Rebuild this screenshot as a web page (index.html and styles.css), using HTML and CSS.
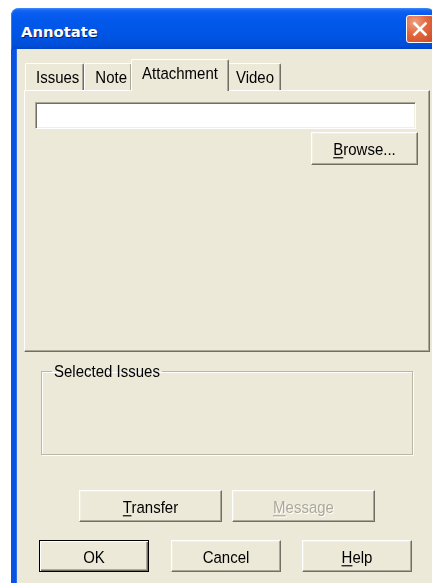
FILE: index.html
```html
<!DOCTYPE html>
<html>
<head>
<meta charset="utf-8">
<title>Annotate</title>
<link rel="stylesheet" href="styles.css">
</head>
<body>
<div class="window">
  <div class="titlebar">
    <span class="title">Annotate</span>
    <span class="close" aria-label="Close">
      <svg width="18" height="18" viewBox="0 0 18 18"><path d="M3.5 3.5 L14.5 14.5 M14.5 3.5 L3.5 14.5" stroke="#fff" stroke-width="2.6" stroke-linecap="square"/></svg>
    </span>
  </div>
  <div class="client">
    <div class="tabs">
      <div class="tab t-issues"><span class="lbl">Issues</span></div>
      <div class="tab t-note"><span class="lbl">Note</span></div>
      <div class="tab selected"><span class="lbl">Attachment</span></div>
      <div class="tab t-video"><span class="lbl">Video</span></div>
    </div>
    <div class="panel">
      <div class="field"></div>
      <div class="panel-actions">
        <button class="btn browse"><span class="lbl"><u>B</u>rowse...</span></button>
      </div>
    </div>
    <fieldset class="group">
      <legend><span class="lbl">Selected Issues</span></legend>
    </fieldset>
    <div class="row row-mid">
      <button class="btn wide"><span class="lbl"><u>T</u>ransfer</span></button>
      <button class="btn wide disabled"><span class="lbl"><u>M</u>essage</span></button>
    </div>
    <div class="row row-bottom">
      <button class="btn std default"><span class="lbl">OK</span></button>
      <button class="btn std"><span class="lbl">Cancel</span></button>
      <button class="btn std"><span class="lbl"><u>H</u>elp</span></button>
    </div>
  </div>
</div>
</body>
</html>
```
FILE: styles.css
```css
html, body {
  margin: 0;
  padding: 0;
  background: #fff;
  overflow: hidden;
  height: 583px;
}

.window {
  margin: 8px 0 0 11px;
  width: 424px;
  font-family: "Liberation Sans", Arial, sans-serif;
  font-size: 15px;
  color: #000;
}

/* dialog text is drawn slightly tall and narrow */
.lbl {
  display: inline-block;
  transform: scaleY(1.16);
}

/* Luna title bar */
.titlebar {
  height: 41px;
  box-sizing: border-box;
  display: flex;
  align-items: flex-start;
  border-radius: 8px 8px 0 0;
  background: linear-gradient(#3d8ffd 0, #1a68f4 2px, #0a5cf0 5px, #0058ea 14px, #0054e3 70%, #004ed8 92%, #0044c8 100%);
  box-shadow: inset 1px 0 #2f7cf5;
}

.title {
  font-family: "DejaVu Sans", sans-serif;
  font-weight: bold;
  font-size: 14.8px;
  color: #fff;
  text-shadow: 1px 1px 0 #0a1e70;
  margin: 15px 0 0 10px;
  line-height: 18px;
}

.close {
  margin: 7px 1px 0 auto;
  width: 28px;
  height: 28px;
  box-sizing: border-box;
  border: 1px solid #fff;
  border-radius: 3px;
  background: radial-gradient(circle at 30% 25%, #f0a080 0, #e2673f 45%, #cc4a23 100%);
  display: flex;
  align-items: center;
  justify-content: center;
}

/* dialog body */
.client {
  background: #ece9d8;
  border-left: 5px solid #0a52e0;
  box-shadow: inset 1px 0 #2a6df0;
  height: 534px;
  box-sizing: border-box;
  padding: 10px 0 0 8px;
}

.tabs {
  display: flex;
  align-items: flex-start;
  padding-left: 1px;
  height: 31px;
  position: relative;
  z-index: 1;
}

.tab {
  margin-top: 4px;
  height: 27px;
  box-sizing: border-box;
  line-height: 26px;
  padding: 0 4px 0 10px;
  border-top: 1px solid #fff;
  border-left: 1px solid #fff;
  border-right: 1px solid #716f64;
  box-shadow: inset -1px 0 #aca899;
  border-radius: 2px 2px 0 0;
  background: #ece9d8;
}

.tab.selected {
  margin: 0 -2px 0 -1px;
  height: 32px;
  line-height: 26px;
  padding: 0 10px 0 10px;
  position: relative;
  z-index: 2;
}

.t-video { padding: 0 6px 0 8px; }

.panel {
  width: 406px;
  height: 262px;
  box-sizing: border-box;
  border-top: 1px solid #fff;
  border-left: 1px solid #fff;
  border-right: 1px solid #716f64;
  border-bottom: 1px solid #716f64;
  box-shadow: inset -1px -1px #aca899;
  padding: 11px 13px 0 10px;
}

.field {
  height: 27px;
  box-sizing: border-box;
  background: #fff;
  border-top: 1px solid #aca899;
  border-left: 1px solid #aca899;
  border-right: 1px solid #fff;
  border-bottom: 1px solid #fff;
  box-shadow: inset 1px 1px #716f64, inset -1px -1px #f1efe2;
}

.panel-actions {
  display: flex;
  justify-content: flex-end;
  margin: 3px -2px 0 0;
}

/* classic push buttons */
.btn {
  font: inherit;
  color: #000;
  background: #ece9d8;
  box-sizing: border-box;
  padding: 0;
  margin: 0;
  border-top: 1px solid #fff;
  border-left: 1px solid #fff;
  border-right: 1px solid #716f64;
  border-bottom: 1px solid #716f64;
  box-shadow: inset -1px -1px #aca899, inset 1px 1px #f1efe2;
  text-align: center;
  line-height: 1;
}

.btn u { text-decoration-thickness: 1px; text-underline-offset: 2px; }

.browse {
  width: 107px;
  height: 33px;
}

.group {
  margin: 10px 0 0 17px;
  width: 372px;
  height: 93px;
  box-sizing: border-box;
  padding: 0 0 0 10px;
  border: 1px solid #b9b6a6;
  box-shadow: inset 1px 1px #fff, 1px 1px #fff;
}

.group legend {
  padding: 0 2px;
  line-height: 18px;
}

.row {
  display: flex;
}

.row-mid {
  margin: 35px 0 0 55px;
  gap: 10px;
}

.wide {
  width: 143px;
  height: 32px;
}

.disabled {
  color: #aca899;
  text-shadow: 1px 1px #fff;
}

.row-bottom {
  margin: 18px 0 0 15px;
  gap: 22px;
}

.std {
  width: 110px;
  height: 32px;
}

.row-bottom .std:last-child { margin-left: -1px; }

.default {
  border: 1px solid #000;
  box-shadow: inset 1px 1px #fff, inset -1px -1px #716f64, inset -2px -2px #aca899;
}
```
